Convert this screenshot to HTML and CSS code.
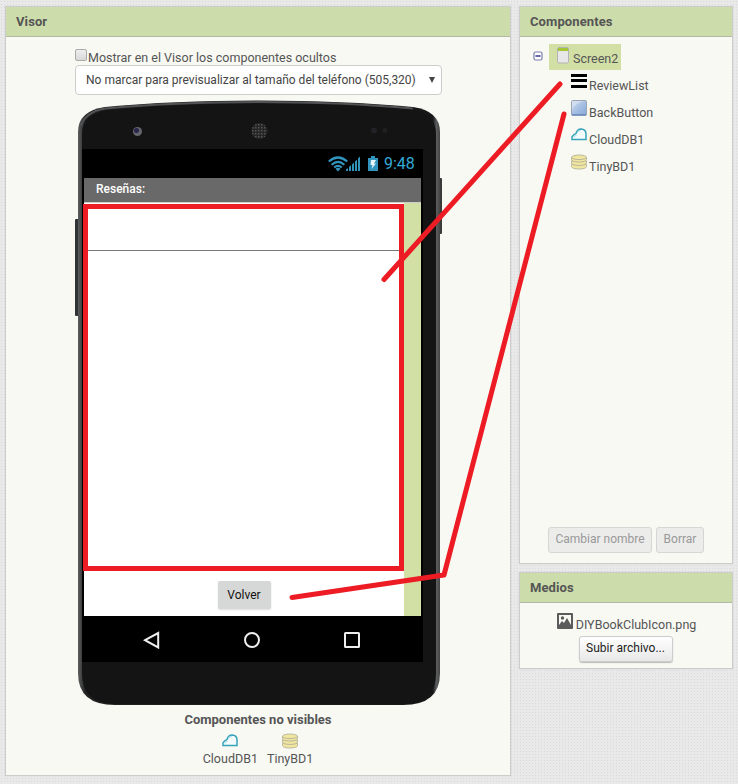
FILE: index.html
```html
<!DOCTYPE html>
<html lang="es">
<head>
<meta charset="utf-8">
<title>Visor</title>
<link rel="stylesheet" href="styles.css">
</head>
<body>
<svg class="defs" width="0" height="0">
  <symbol id="cloud" viewBox="0 0 16 16"><path d="M1 12.5V9.8L3 7.6 5 6.6Q6 2 10 1.9 15 2 15 7v5.500z" fill="#f4fbfc" stroke="#36a3ba" stroke-width="1.500"/><path d="M3 10.500Q3 8 5.500 8.500M6.200 6Q7 3.500 10 3.200" fill="none" stroke="#a8e2ec"/></symbol>
  <symbol id="db" viewBox="0 0 16 16"><g fill="#f0e6a0" stroke="#b5b19a" stroke-width=".9"><path d="M.5 10.500v2Q1 15 8 15t7.500-2.500v-2z"/><path d="M.5 6.800V9Q1 11.400 8 11.400T15.500 9V6.800z"/><path d="M.5 3.500v2Q1 8 8 8t7.500-2.500v-2z"/><ellipse cx="8" cy="3.300" rx="7.500" ry="2.300"/></g></symbol>
</svg>
<main class="page">
  <section class="panel viewer">
    <h2 class="head">Visor</h2>
    <div class="options">
      <div class="check"><span class="box"></span><span class="check-label">Mostrar en el Visor los componentes ocultos</span></div>
      <div class="select"><span>No marcar para previsualizar al tamaño del teléfono (505,320)</span><i class="arrow"></i></div>
    </div>
    <div class="phone">
      <svg class="shell" width="368" height="606" viewBox="0 0 368 606">
        <defs>
          <linearGradient id="edge"><stop offset="0" stop-color="#5b5d5e"/><stop offset=".012" stop-color="#3a3c3d"/><stop offset=".02" stop-color="#222"/><stop offset=".98" stop-color="#171717"/><stop offset=".99" stop-color="#5b5d5e"/><stop offset="1" stop-color="#444"/></linearGradient>
          <pattern id="grille" width="3" height="3" patternUnits="userSpaceOnUse"><rect width="3" height="3" fill="#252525"/><rect width="1.500" height="1.500" fill="#555"/></pattern>
        </defs>
        <rect x="0" y="119" width="5" height="97" rx="1" fill="#303434"/>
        <rect x="363" y="78" width="4" height="56" rx="1" fill="#3a3c3c"/>
        <path d="M3 32Q3 11 30 7 100 .5 184 .5T338 7Q365 11 365 32V573Q365 605 328 605H40Q3 605 3 573z" fill="url(#edge)"/>
        <path d="M7 34Q7 14 32 10 100 3.500 184 3.500T336 10Q361 14 361 34V573Q361 604 328 604H40Q7 604 7 573z" fill="#141414"/>
        <path d="M6 26Q10 12 30 8.500 100 2 184 2T338 8.500" fill="none" stroke="#505254" stroke-width="2"/>
        <circle cx="62.500" cy="31.500" r="4.500" fill="#65656c"/><circle cx="61.500" cy="30.500" r="2.500" fill="#28264d"/>
        <circle cx="184.500" cy="31" r="8" fill="url(#grille)"/>
        <circle cx="299" cy="30.500" r="3" fill="#222226"/><circle cx="310" cy="30.500" r="2.500" fill="#202020"/>
      </svg>
      <div class="display">
        <div class="status">
          <svg width="62" height="18" viewBox="0 0 62 18">
            <g fill="none" stroke="#3194bd" stroke-width="2.200"><path d="M.8 6.500Q10 -1.500 19.200 6.500M3.600 9.700Q10 4 16.400 9.700M6.200 12.500Q10 9.300 13.800 12.500"/></g><path d="M7.500 13.700Q10 12 12.500 13.700L10 16.500z" fill="#3194bd"/>
            <path d="M18 16V14.500L20 13v3zM21 16v-4l2-1.700V16zM24 16V9.500l2-1.900V16zM27 16V6.600l2-1.900V16zM30 16V3.600l2-2.100V16z" fill="#3194bd"/>
            <path d="M40 3h3V1h4v2h3v13H40z" fill="#3194bd"/><path d="M43 5h5l-2 3.500h2L43.500 14l1-4H42.500z" fill="#e4f5fc"/>
          </svg>
          <span class="clock">9:48</span>
        </div>
        <div class="app">
          <div class="title">Reseñas:</div>
          <div class="body">
            <div class="content">
              <div class="list"><div class="row"></div></div>
              <div class="actions"><span class="volver">Volver</span></div>
            </div>
            <div class="strip"></div>
          </div>
        </div>
        <div class="nav">
          <svg width="18" height="18" viewBox="0 0 18 18"><path d="M2 9.200L15.200 2v14.500z"/></svg>
          <svg width="18" height="18" viewBox="0 0 18 18"><circle cx="9" cy="9" r="7"/></svg>
          <svg width="18" height="18" viewBox="0 0 18 18"><rect x="2" y="2" width="14" height="14" rx=".5"/></svg>
        </div>
      </div>
    </div>
    <div class="hidden-title">Componentes no visibles</div>
    <div class="hidden-list">
      <div class="item"><svg width="16" height="16"><use href="#cloud"/></svg><span>CloudDB1</span></div>
      <div class="item"><svg width="16" height="16"><use href="#db"/></svg><span>TinyBD1</span></div>
    </div>
  </section>
  <div class="side">
    <section class="panel components">
      <h2 class="head">Componentes</h2>
      <div class="root">
        <svg class="toggle" width="10" height="10" viewBox="0 0 10 10"><rect x="1" y="1" width="8" height="8" rx="1.500" fill="#fff" stroke="#7680b2" stroke-width="1.200"/><path d="M2.500 5h5" stroke="#000070" stroke-width="1.200"/></svg>
        <div class="selected"><svg width="12" height="17" viewBox="0 0 12 17"><rect x=".5" y=".5" width="11" height="15.500" rx="1.500" fill="#e7e7e7" stroke="#b2b2b2"/><path d="M1 1h10v3H1z" fill="#a5c736"/></svg><span>Screen2</span></div>
      </div>
      <ul class="tree">
        <li><svg width="16" height="16" viewBox="0 0 16 16"><path d="M0 1h16v3H0zM0 6h16v3H0zM0 12h16v3H0z"/></svg><span>ReviewList</span></li>
        <li><svg width="16" height="16" viewBox="0 0 16 16"><defs><linearGradient id="btn" x1="0" y1="0" x2="1" y2="1"><stop offset="0" stop-color="#d0ddef"/><stop offset=".5" stop-color="#a6bfe2"/><stop offset="1" stop-color="#86a8da"/></linearGradient></defs><rect x=".5" y=".5" width="15" height="15" rx="1" fill="url(#btn)" stroke="#9ba4b3"/><path d="M1 10Q4 3 14 1H1z" fill="#e0e8f4" opacity=".55"/><path d="M1 14h14v1.500H1z" fill="#6d8fc5"/></svg><span>BackButton</span></li>
        <li><svg width="16" height="16"><use href="#cloud"/></svg><span>CloudDB1</span></li>
        <li><svg width="16" height="16"><use href="#db"/></svg><span>TinyBD1</span></li>
      </ul>
      <div class="buttons"><span class="btn off rename">Cambiar nombre</span><span class="btn off delete">Borrar</span></div>
    </section>
    <section class="panel media">
      <h2 class="head">Medios</h2>
      <div class="file"><svg width="16" height="16" viewBox="0 0 16 16"><rect width="16" height="16" rx="1" fill="#5b5b5b"/><path d="M2 2h12v11H2z" fill="#f8f9f3"/><path d="M2 12l3-4 2 2 3-5 4 7v2H2z" fill="#5b5b5b"/><circle cx="5.500" cy="5" r="1.700" fill="#5b5b5b"/></svg><span>DIYBookClubIcon.png</span></div>
      <span class="btn upload">Subir archivo...</span>
    </section>
  </div>
</main>
<svg class="marks" width="738" height="784" viewBox="0 0 738 784">
  <path d="M560 84L384 279.500"/>
  <path d="M564 114L444 575 292 597.500"/>
</svg>
</body>
</html>
```

FILE: styles.css
```css
* { box-sizing: border-box; }
body {
  margin: 0;
  font: 12px/16px Roboto, sans-serif;
  color: #555;
  background-color: #e9e9e9;
  background-image: radial-gradient(#d9d9d9 0.7px, transparent 0.9px);
  background-size: 3px 3px;
}
svg { display: block; flex: none; }
span { white-space: nowrap; }
.defs { position: absolute; }
.page { display: flex; gap: 8px; padding: 6px 5px 8px; height: 784px; overflow: hidden; }
.panel { background: #f8f9f3; border: 1px solid #ccc; box-shadow: 0 0 1px #ccc; }
.viewer { width: 506px; height: 770px; }
.side { width: 214px; display: flex; flex-direction: column; gap: 8px; }
.components { height: 558px; display: flex; flex-direction: column; }
.media { height: 97px; display: flex; flex-direction: column; align-items: center; }
.head {
  margin: 0; height: 30px; padding: 0 10px; width: 100%; flex: none;
  font-size: 13px; font-weight: 700; line-height: 29px; letter-spacing: .1px;
  background: #ccdcaa; border-bottom: 1px solid #b4b9a7;
}
.options { width: 367px; margin: 12px 0 0 69px; }
.check { display: flex; height: 16px; font-size: 12.500px; }
.box { width: 12px; height: 12px; margin-right: 1px; border: 1px solid #aaa; border-radius: 2px; background: linear-gradient(#eee, #d9d9d9); }
.check-label { line-height: 17px; }
.select {
  height: 30px; padding: 0 6px 0 10px; display: flex; align-items: center; justify-content: space-between;
  background: #fff; border: 1px solid #ccc; border-radius: 4px; line-height: 28px; color: #444;
}
.arrow { border: 3.500px solid transparent; border-top: 6px solid #444; border-bottom: 0; }
.phone { position: relative; width: 368px; height: 606px; margin: 5px 0 0 69px; padding: 49px 20px 44px 7px; }
.shell { position: absolute; inset: 0; }
.display { position: relative; width: 341px; height: 513px; background: #000; display: flex; flex-direction: column; }
.status { height: 29px; display: flex; padding: 6px 9px 0 246px; gap: 0; }
.clock { color: #33a9d6; font-size: 16px; line-height: 18px; margin-left: -6px; }
.app { width: 337px; height: 438px; margin-left: 2px; display: flex; flex-direction: column; background: #fff; }
.title { height: 25px; padding-left: 12px; background: #696969; border-bottom: 1px solid #ccc; color: #fff; line-height: 22px; font-weight: 500; }
.body { flex: 1; display: flex; }
.content { width: 320px; padding-top: 1px; }
.list { height: 367px; margin-left: -1px; border: 5px solid #ed1c24; }
.row { height: 42px; border-bottom: 1px solid #777; }
.actions { display: flex; justify-content: center; padding-top: 10px; }
.volver { width: 53px; height: 28px; border-radius: 2px; background: #d6d8d7; color: #111; text-align: center; line-height: 28px; box-shadow: 0 1px 2px #ddd; }
.strip { flex: 1; background: #d2e0a6; }
.nav { flex: 1; display: flex; gap: 82px; padding: 15px 0 0 61px; }
.nav svg { fill: none; stroke: #eee; stroke-width: 2; }
.hidden-title { text-align: center; font-size: 13px; font-weight: 700; margin-top: 5px; line-height: 17px; }
.hidden-list { display: flex; justify-content: center; gap: 9px; margin-top: 5px; font-size: 12.500px; }
.item { display: flex; flex-direction: column; align-items: center; gap: 2px; }
.root { display: flex; margin: 7px 0 0 13px; }
.toggle { margin-top: 7px; }
.selected { display: flex; width: 72px; height: 26px; margin-left: 6px; padding: 3px 0 0 8px; gap: 4px; background: #d2e0a6; font-size: 12.500px; line-height: 23px; }
.tree { list-style: none; margin: 3px 0 0 51px; padding: 0; font-size: 12.500px; }
.tree li { display: flex; height: 27px; gap: 2px; }
.tree span { line-height: 26px; }
.buttons { margin-top: auto; padding: 0 0 10px 28px; display: flex; gap: 4px; }
.btn { height: 26px; border: 1px solid #ccc; border-radius: 3px; text-align: center; line-height: 23px; color: #222; background: linear-gradient(#fff, #e8e8e8); box-shadow: 0 1px 1px #bbb; }
.off { background: #ececeb; color: #999; border-color: #d6d6d6; box-shadow: none; }
.rename { width: 104px; }
.delete { width: 48px; }
.file { display: flex; gap: 3px; padding-left: 1px; margin-top: 10px; height: 23px; line-height: 24px; font-size: 12.500px; }
.upload { width: 94px; margin-right: 1px; }
.marks { position: absolute; left: 0; top: 0; fill: none; stroke: #ed1c24; stroke-width: 5; stroke-linecap: round; stroke-linejoin: round; }
```
